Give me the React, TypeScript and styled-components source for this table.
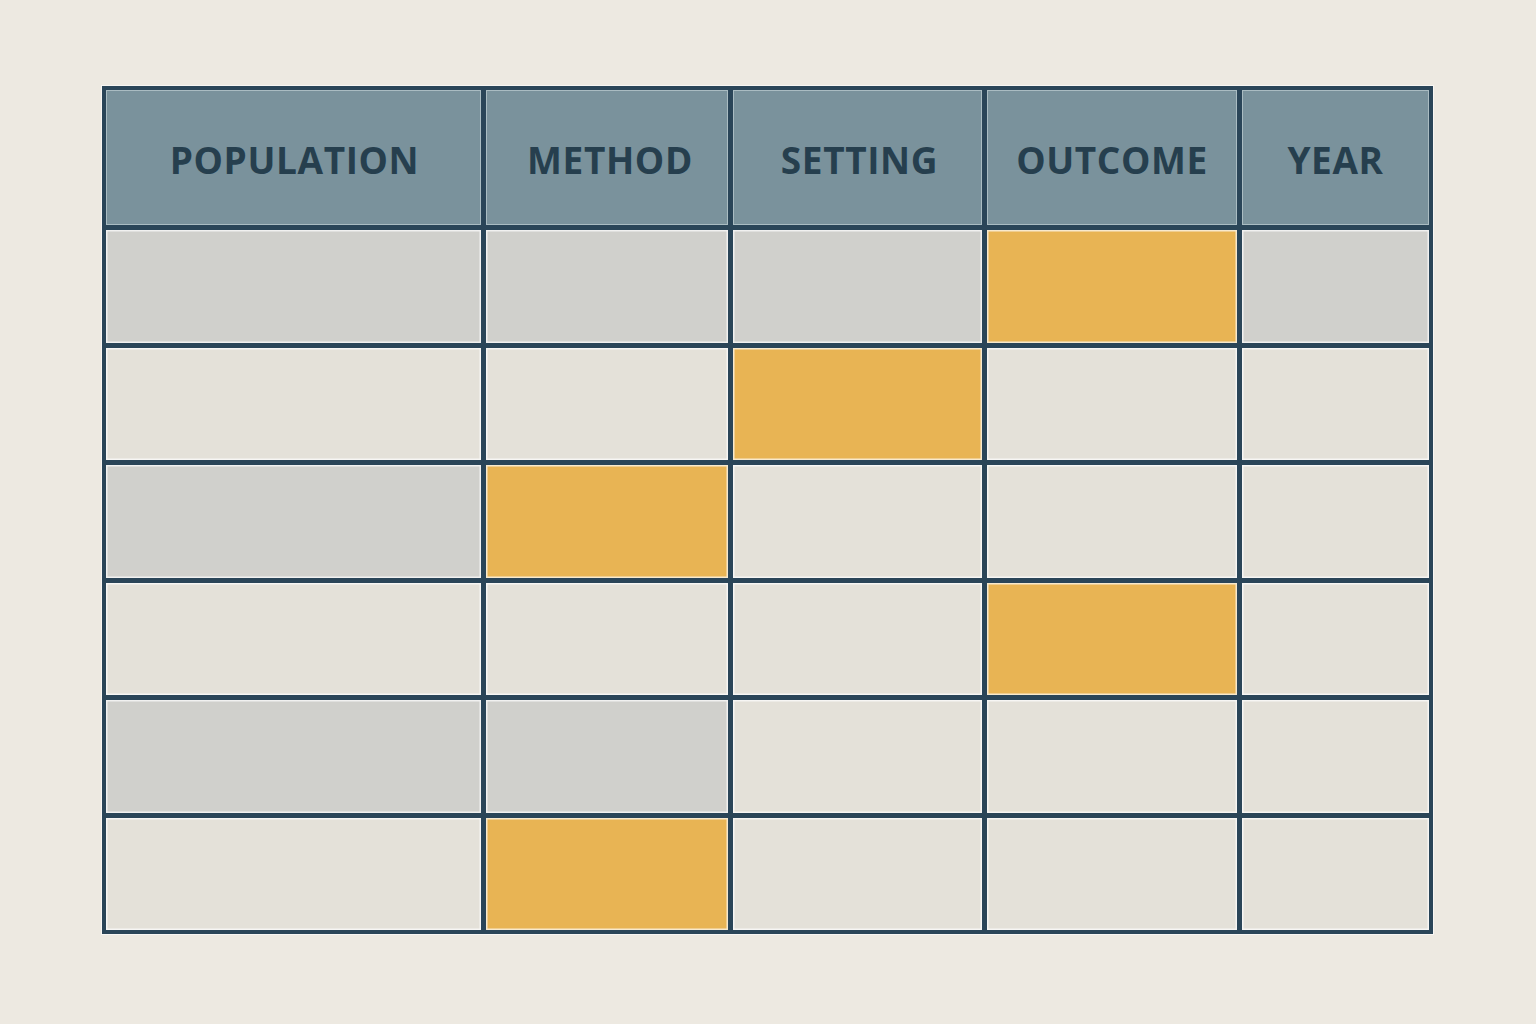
import React from "react";
import styled, { createGlobalStyle } from "styled-components";

const Global = createGlobalStyle`
  html, body { margin: 0; padding: 0; background: #ede9e1; }
  #root { min-height: 1024px; }
`;

const Page = styled.div`
  width: 1536px;
  height: 1024px;
  box-sizing: border-box;
  padding: 86px 0 0 102px;
  background: #ede9e1;
`;

const Grid = styled.div`
  display: grid;
  grid-template-columns: 375px 242px 249px 250px 187px;
  grid-template-rows: 135px repeat(6, 112.5px);
  gap: 5px;
  width: fit-content;
  border: 4px solid #2a4558;
  background: #2a4558;
  box-shadow: 0 0 0 1px rgba(255, 255, 255, 0.6);
`;

const HeaderCell = styled.div<{ $shift?: number }>`
  background: #7a929c;
  box-shadow: inset 0 0 0 1px rgba(210, 222, 226, 0.55);
  display: flex;
  align-items: center;
  justify-content: center;
  padding-left: ${(p) => (p.$shift ?? 0) * 2}px;
  padding-top: 4px;
  font-family: "Open Sans", "DejaVu Sans", sans-serif;
  font-weight: 700;
  font-size: 37px;
  letter-spacing: 0.6px;
  color: #263f4e;
`;

type Tone = "gray" | "light" | "yellow";

const toneColor: Record<Tone, string> = {
  gray: "#d0d0cc",
  light: "#e4e1d9",
  yellow: "#e8b454",
};

const Cell = styled.div<{ $tone: Tone }>`
  background: ${(p) => toneColor[p.$tone]};
  box-shadow: inset 0 0 0 1.5px rgba(255, 255, 255, 0.7);
`;

const headers: { label: string; shift: number }[] = [
  { label: "POPULATION", shift: 1 },
  { label: "METHOD", shift: 3 },
  { label: "SETTING", shift: 2 },
  { label: "OUTCOME", shift: 0 },
  { label: "YEAR", shift: 0 },
];

const G: Tone = "gray";
const L: Tone = "light";
const Y: Tone = "yellow";

const rows: Tone[][] = [
  [G, G, G, Y, G],
  [L, L, Y, L, L],
  [G, Y, L, L, L],
  [L, L, L, Y, L],
  [G, G, L, L, L],
  [L, Y, L, L, L],
];

export default function App() {
  return (
    <>
      <Global />
      <Page>
        <Grid>
          {headers.map((h) => (
            <HeaderCell key={h.label} $shift={h.shift}>
              {h.label}
            </HeaderCell>
          ))}
          {rows.map((r, ri) =>
            r.map((t, ci) => <Cell key={`${ri}-${ci}`} $tone={t} />)
          )}
        </Grid>
      </Page>
    </>
  );
}
